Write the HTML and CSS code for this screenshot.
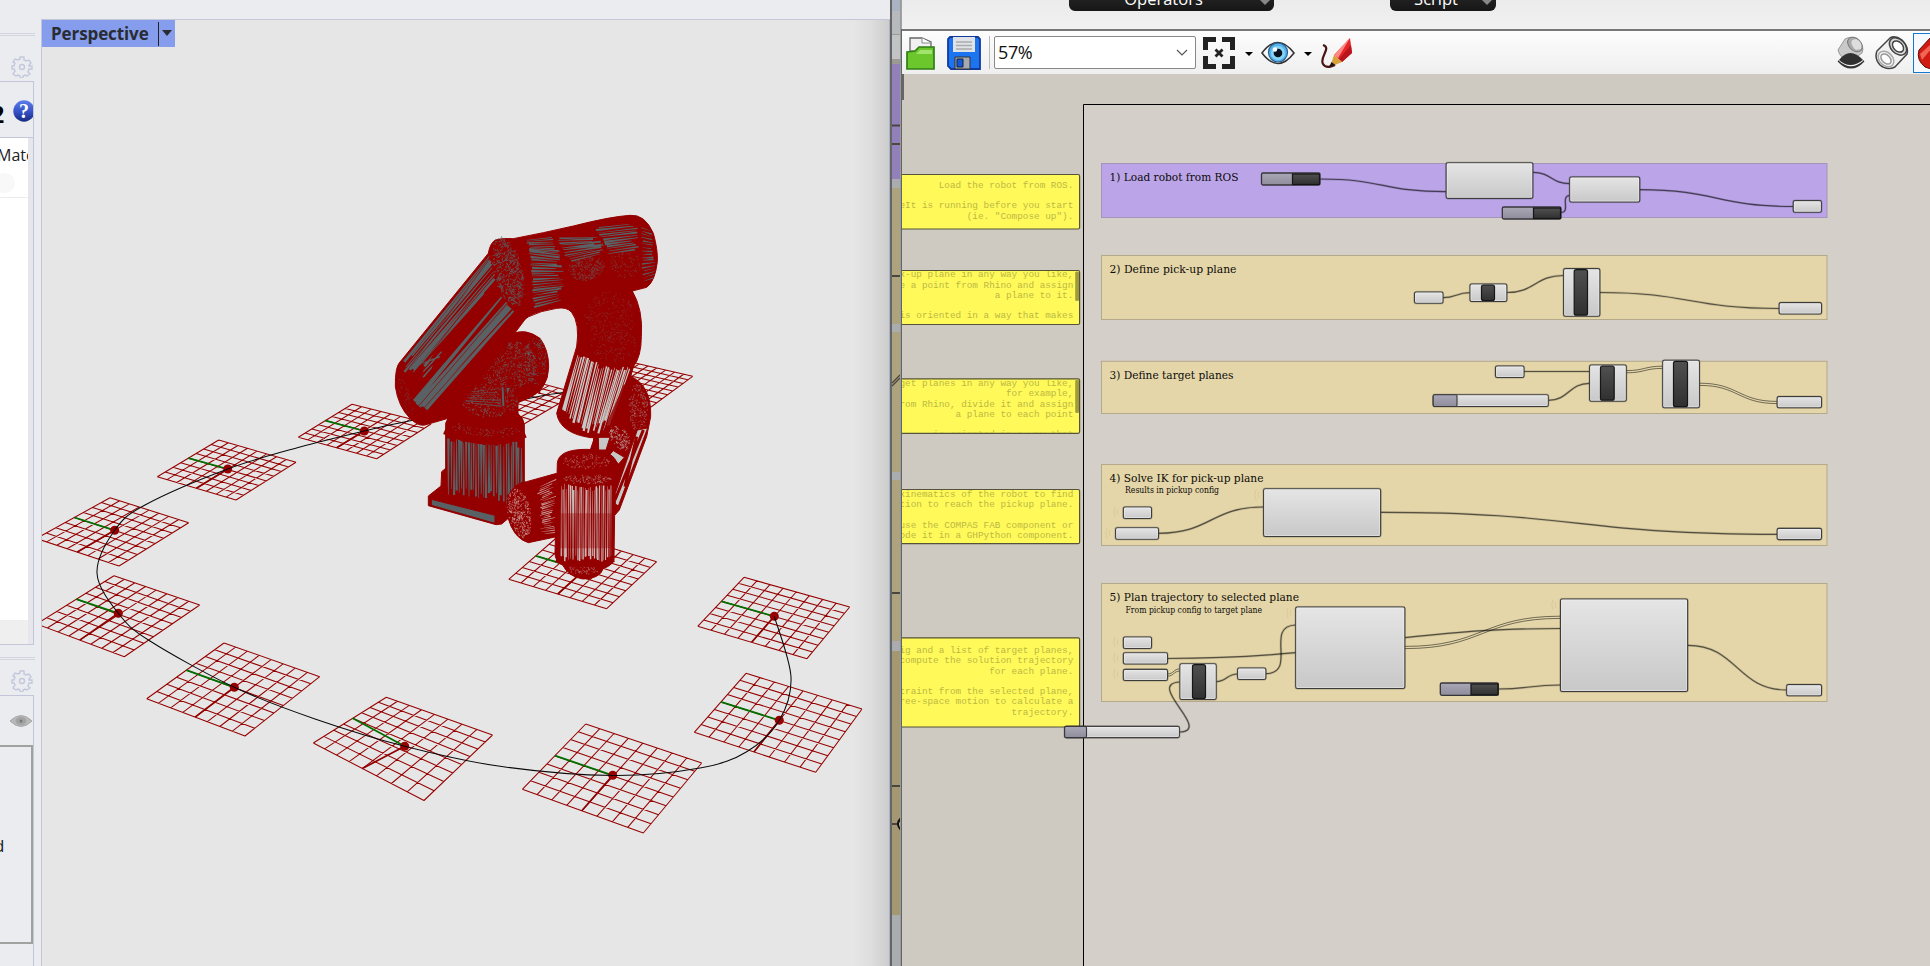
FILE: index.html
```
<!DOCTYPE html>
<html lang="en">
<head>
<meta charset="utf-8">
<title>Robot planning</title>
<link rel="stylesheet" href="styles.css">
</head>
<body>
<div class="desktop">
  <section class="rhino">
    <aside class="side">
      <div class="side-head"><svg class="gear" viewBox="0 0 22 22"><use href="#gear"/></svg></div>
      <div class="panel materials">
        <div class="mat-title"><span class="cut">2</span>
          <svg class="help" viewBox="0 0 22 22"><defs><linearGradient id="hb" x1="0" y1="0" x2="0" y2="1"><stop offset="0" stop-color="#5f7fec"/><stop offset=".55" stop-color="#3450c4"/><stop offset="1" stop-color="#172a7d"/></linearGradient></defs><circle cx="11" cy="11" r="10.7" fill="url(#hb)"/><text x="11" y="18" text-anchor="middle" class="q">?</text></svg>
        </div>
        <div class="mat-body"><div class="mat-row"><span>Mate</span><i></i></div></div>
      </div>
      <div class="side-head second"><svg class="gear" viewBox="0 0 22 22"><use href="#gear"/></svg></div>
      <div class="panel layers">
        <div class="eye-row"><svg width="22" height="12" viewBox="0 0 22 12"><path d="M0 6Q11-5 22 6Q11 17 0 6Z" fill="#b9b9b9" stroke="#a0a0a0" stroke-width=".8"/><ellipse cx="11" cy="6" rx="5.5" ry="4" fill="#a2a2a2"/><circle cx="11" cy="6" r="1.5" fill="#777"/></svg></div>
        <div class="layer-box"><span>d</span></div>
      </div>
    </aside>
    <main class="viewport">
      <div class="tab"><span>Perspective</span><b></b></div>
      <svg id="scene" class="scene" viewBox="42 20 850 946"></svg>
      <div class="shade"></div>
    </main>
  </section>
  <div class="strip">
    <svg viewBox="890 0 12 966" width="12" height="966">
      <rect x="890" width="12" height="966" fill="#aaacaf"/>
      <rect x="892" width="8" height="11" fill="#a9b3c4"/><rect x="892" y="11" width="8" height="23" fill="#b7b9bd"/><rect x="892" y="34" width="8" height="1" fill="#999"/><rect x="892" y="35" width="8" height="24" fill="#c2c3c4"/><rect x="892" y="59" width="8" height="5" fill="#9d9a93"/>
      <rect x="892" y="64" width="8" height="115" fill="#9280ba"/>
      <g fill="#ada37e"><rect x="892" y="188" width="8" height="136"/><rect x="892" y="332" width="8" height="140"/><rect x="892" y="480" width="8" height="161"/><rect x="892" y="651" width="8" height="264" fill="#a39871"/></g>
      <g stroke="#4b453f" stroke-width="2"><path d="M892 125.500h8M892 144h8M892 276h8M892 593h8M892 786h8M892 824h8"/><path d="M892 383l8-8M892 386l8-8" stroke-width="1.300"/></g>
      <path d="M901 818q-6 6 0 12" fill="#ddd" stroke="#111" stroke-width="2"/>
      <rect x="890" width="2" height="966" fill="#666"/><rect x="900" width="1.500" height="966" fill="#9a9a9a"/><rect x="901.200" y="29" width=".8" height="937" fill="#555"/>
    </svg>
  </div>
  <section class="gh">
    <div class="ribbon"><div class="cat ops">Operators<i></i></div><div class="cat script">Script<i></i></div></div>
    <div class="toolbar">
      <svg width="30" height="34" viewBox="0 0 30 34"><path d="M4 15V2h12l9 4v11z" fill="#f1f1f1" stroke="#666" stroke-width="1.300"/><path d="M16 2v5h9" fill="#fff" stroke="#888"/><path d="M1 16l8-1 4-4h15v22H1z" fill="#6cc72c" stroke="#317e16" stroke-width="1.700"/><path d="M3 18h7l4-4h12v4z" fill="#a1e36b"/></svg>
      <svg width="34" height="34" viewBox="0 0 34 34"><path d="M3 1h28l2 2v30H4l-3-3V3z" fill="#1c74f1" stroke="#123a9c" stroke-width="1.800"/><path d="M6 1h22v15H6z" fill="#dfe3e8"/><path d="M9 6h16M9 9.500h16M9 13h16" stroke="#aaa" stroke-width="1.500"/><path d="M8 21h15v12H8z" fill="#a5a8ae" stroke="#333"/><path d="M10 23h6v8h-6z" fill="#1659d8" stroke="#124"/></svg>
      <span class="sep"></span>
      <div class="zoombox"><span>57%</span><svg width="12" height="8" viewBox="0 0 12 8"><path d="M1 1l5 5 5-5" fill="none" stroke="#555" stroke-width="1.200"/></svg></div>
      <svg class="fit" width="34" height="34" viewBox="0 0 34 34"><path d="M3.500 14V3.500H14M20 3.500h10.500V14M30.500 20v10.500H20M14 30.500H3.500V20" fill="none" stroke="#222" stroke-width="5"/><path d="M13.500 13.500l7 7m0-7l-7 7" stroke="#222" stroke-width="2.800"/></svg>
      <i class="dd"></i>
      <svg class="eye" width="34" height="24" viewBox="0 0 34 24"><path d="M1 12Q17-9 33 12Q17 33 1 12Z" fill="#f8f8f8" stroke="#333" stroke-width="1.600"/><circle cx="17" cy="11.500" r="9.500" fill="#57b4e9" stroke="#27609a" stroke-width="1.200"/><circle cx="17" cy="12" r="7" fill="#87d4f6"/><circle cx="17" cy="12" r="4.300" fill="#08111f"/><circle cx="14" cy="8.500" r="2.200" fill="#fff"/></svg>
      <i class="dd"></i>
      <svg class="pen" width="34" height="34" viewBox="0 0 34 34"><path d="M3 9C12 12-1 21 3 28Q6 33 15 29" fill="none" stroke="#4a1512" stroke-width="2.200"/><path d="M30 2L32 17L22 26L14 19Z" fill="#e2262b"/><path d="M30 2L14 19L18 22Z" fill="#ff8a83"/><path d="M31 9L32 17L22 26L19 23Z" fill="#b9151c"/><path d="M14 19L22 26L10 31Z" fill="#d8a13c"/><path d="M11.500 26L15.500 29L8.500 32Z" fill="#291010"/></svg>
      <span class="grow"></span>
      <svg class="cyl" width="28" height="34" viewBox="0 0 28 34"><path d="M1 14L8 3Q15-1 21 4Q28 10 25 17L14 25Q3 23 1 14z" fill="#c9c9c9" stroke="#999"/><ellipse cx="18" cy="8.500" rx="8.500" ry="6" transform="rotate(45 18 8.500)" fill="#aaa" stroke="#777"/><path d="M15 4Q13 9 19 14L24 13Q26 6 19 3z" fill="#ddd"/><path d="M1 25q13 14 26 0q-13 12-26 0" fill="#ddd" stroke="#333" stroke-width="1.200"/><path d="M2 24Q13 10 26 24Q13 34 2 24z" fill="#303030"/></svg>
      <svg class="cyl2" width="34" height="34" viewBox="0 0 34 34"><g fill="none" stroke="#444" stroke-width="1.500"><path d="M2 15L15 2Q20-1 27 4Q34 11 32 18L20 31Q12 35 5 29Q-1 22 2 15z" fill="#f1f1f1"/><ellipse cx="23" cy="10.500" rx="10" ry="7" transform="rotate(45 23 10.500)" fill="#ddd"/><ellipse cx="23" cy="10.500" rx="6.500" ry="4.500" transform="rotate(45 23 10.500)" fill="#fff"/><ellipse cx="11" cy="23" rx="9" ry="6.500" transform="rotate(45 11 23)" stroke="#aaa"/><ellipse cx="11" cy="23" rx="6" ry="4" transform="rotate(45 11 23)" fill="#fff" stroke="#999"/></g></svg>
      <div class="active"><svg width="14" height="34" viewBox="0 0 14 34"><path d="M14 1L2 14Q-1 24 8 31L14 33z" fill="#d01b13" stroke="#650b08"/><path d="M14 8L3 18L5 24L14 13z" fill="#f26556"/></svg></div>
    </div>
    <svg id="canvas" class="canvas" viewBox="902 74 1028 892"></svg>
  </section>
</div>
<svg width="0" height="0" class="defs"><defs><symbol id="gear" viewBox="0 0 22 22"><path d="M9 1h4v3l2 1 3-1 2 3-2 2v1h3v3h-3l-1 3 2 2-3 2-2-1-2 1v2H9v-2l-2-1-2 1-3-2 2-3-1-2H1v-3h2l1-3-2-1 2-3 3 1 2-1z" fill="none" stroke="#c3c9dc" stroke-width="1.400"/><circle cx="11" cy="11" r="2.500" fill="none" stroke="#c3c9dc" stroke-width="1.400"/></symbol></defs></svg>
<script src="draw.js"></script>
</body>
</html>
```
FILE: styles.css
```
html, body { margin: 0; height: 100%; overflow: hidden; }
body { font-family: "Open Sans", "Noto Sans", sans-serif; background: #ebecf0; }
svg { display: block; flex: none; }
.desktop { display: flex; width: 1930px; height: 966px; overflow: hidden; }
.defs { position: absolute; }
.rhino { display: flex; width: 890px; flex: none; box-sizing: border-box; padding-top: 19px; background: #ebecf0; }
.side { width: 41px; flex: none; margin-top: 14px; }
.side-head { width: 35px; height: 47px; border-top: 1px solid #d3d6e2; box-shadow: inset 0 1px #ebecf0, inset 0 2px #d3d6e2; }
.gear { width: 22px; height: 22px; margin-left: 11px; padding-top: 22px; }
.panel { width: 33px; border: 1px solid #c2c6d8; border-left: 0; }
.materials { height: 562px; overflow: hidden; background: #efefef; box-shadow: inset -5px 0 #e6e7ec; }
.mat-title { display: flex; justify-content: flex-end; height: 55px; background: #ebecf0; border-bottom: 1px solid #c2c6d8; }
.cut { width: 13px; overflow: hidden; font: bold 25px "Liberation Serif", serif; padding-top: 19px; text-indent: -8px; line-height: 28px; color: #000; }
.help { width: 22px; height: 22px; margin: 18px -2px 0 0; }
.q { font: bold 20px "Liberation Serif", serif; fill: #fff; }
.mat-body { width: 28px; height: 482px; background: #fff; overflow: hidden; }
.mat-row { height: 59px; border-bottom: 1px solid #ececec; font-size: 16px; color: #222; }
.mat-row span { display: block; margin-left: -3px; line-height: 34px; }
.mat-row i { display: block; width: 20px; height: 20px; margin: 1px 0 0 -5px; border-radius: 50%; background: #f8f8f8; }
.second { margin-top: 12px; height: 37px; }
.second .gear { padding-top: 12px; }
.layers { height: 280px; border-bottom: 0; }
.eye-row { height: 49px; padding: 19px 0 0 10px; box-sizing: border-box; }
.layer-box { height: 195px; border: 2px solid #a1a29f; border-left: 0; }
.layer-box span { display: block; margin-left: -6px; padding-top: 87px; font-size: 17px; line-height: 24px; color: #222; }
.viewport { position: relative; width: 848px; height: 946px; border: solid #c2c6d8; border-width: 1px 0 0 1px; background: #e6e6e6; }
.scene { width: 850px; height: 946px; }
.tab { position: absolute; display: flex; left: 0; top: 0; width: 133px; height: 27px; background: #859dec; color: #292c33; z-index: 2; }
.tab span { width: 117px; box-sizing: border-box; padding-left: 9px; border-right: 1px solid #222; margin: 2px 0 1px; font-size: 17px; line-height: 23px; font-weight: 700; letter-spacing: -.1px; }
.tab b { margin: 10px 0 0 3px; width: 0; height: 0; border: 5.500px solid transparent; border-top: 6px solid #292c33; border-bottom: 0; }
.shade { position: absolute; top: 0; right: 0; width: 38px; height: 100%; background: linear-gradient(90deg, #0000, #00000009 50%, #0000001c); border-right: 1px solid #a9b4c8; box-sizing: border-box; }
.strip { width: 12px; flex: none; }
.gh { width: 1028px; flex: none; }
.ribbon { position: relative; height: 31px; background: linear-gradient(#ebebeb, #f1f1f1); border-bottom: 2px solid #777; box-sizing: border-box; }
.cat { position: absolute; top: -20px; height: 30.500px; background: linear-gradient(#333, #161616); color: #fff; border-radius: 6px; text-align: center; font-size: 16.500px; line-height: 38px; box-sizing: border-box; }
.ops { left: 167px; width: 205px; padding-right: 16px; }
.script { left: 488px; width: 106px; padding-right: 14px; }
.cat i { position: absolute; right: 4px; top: 20px; border: 5px solid transparent; border-top: 5px solid #888; border-bottom: 0; }
.toolbar { display: flex; align-items: center; height: 43px; background: linear-gradient(#fdfdfd, #efefef); padding-left: 4px; box-sizing: border-box; overflow: hidden; }
.toolbar svg + svg { margin-left: 11px; }
.sep { width: 1px; height: 33px; background: #bbb; margin: 0 4px 0 8px; }
.zoombox { display: flex; align-items: center; justify-content: space-between; width: 202px; height: 33px; box-sizing: border-box; border: 1px solid #888; border-radius: 2px; background: #fff; padding: 0 7px 0 3px; font-size: 18px; line-height: 30px; color: #111; letter-spacing: -.4px; }
.zoombox span { padding-bottom: 1px; }
.fit { margin-left: 6px; }
.dd { border: 4px solid transparent; border-top: 4px solid #000; border-bottom: 0; margin-left: 9px; margin-top: 2px; }
.eye { margin-left: 8px; }
.pen { margin-left: 8px; }
.grow { flex: 1; }
.toolbar .cyl2 { margin: 0 4px 0 10px; }
.active { width: 17px; height: 40px; box-sizing: border-box; border: 1px solid #1478cf; border-right: 0; display: flex; align-items: center; padding-left: 3px; background: #f6f9fc; }
.canvas { width: 1028px; height: 892px; background: #cec9c1; }
.note { font: 9.350px "Liberation Mono", monospace; fill: #bcb842; text-anchor: end; }
.title, .sub { font-family: "DejaVu Serif Condensed", "DejaVu Serif", serif; font-stretch: condensed; fill: #0c0b08; }
.title { font-size: 11.700px; }
.sub { font-size: 8.700px; }
```
FILE: draw.js
```
(function () {
  /* ---------- node canvas ---------- */
  var o = '<defs>' +
    '<linearGradient id="n" x1="0" y1="0" x2="0" y2="1"><stop offset="0" stop-color="#e5e5e5"/><stop offset="1" stop-color="#c8c8c8"/></linearGradient>' +
    '<linearGradient id="k" x1="0" y1="0" x2="0" y2="1"><stop offset="0" stop-color="#505050"/><stop offset="1" stop-color="#303030"/></linearGradient>' +
    '<linearGradient id="p" x1="0" y1="0" x2="0" y2="1"><stop offset="0" stop-color="#aaa8b6"/><stop offset="1" stop-color="#8f8d9c"/></linearGradient></defs>';
  function rect(x1, y1, x2, y2, r, fill, stroke, sw) {
    return '<rect x="' + x1 + '" y="' + y1 + '" width="' + (x2 - x1) + '" height="' + (y2 - y1) + '" rx="' + r + '" fill="' + fill + '" stroke="' + stroke + '" stroke-width="' + (sw || 1) + '"/>';
  }
  o += '<path d="M1083.500 966V104.500H1940V966" fill="#d4cfc8" stroke="#000"/>';

  var notes = [
    [174.5, 229, [[187.7, 'Load the robot from ROS.'], [208.3, 'eIt is running before you start'], [218.7, '(ie. "Compose up").']]],
    [270.5, 324.5, [[277.3, 'k-up plane in any way you like,'], [287.7, 'e a point from Rhino and assign'], [297.7, 'a plane to it.'], [318, 'is oriented in a way that makes']], 302],
    [378.8, 433.3, [[386, 'get planes in any way you like,'], [396.3, 'for example,'], [406.7, 'rom Rhino, divide it and assign'], [417, 'a plane to each point'], [437.3, 'is oriented in a way that']], 414],
    [489.5, 543.7, [[497.3, 'kinematics of the robot to find'], [507.3, 'tion to reach the pickup plane.'], [528, 'use the COMPAS FAB component or'], [538.3, 'ode it in a GHPython component.']]],
    [637.8, 727, [[653.3, 'ig and a list of target planes,'], [663.3, 'compute the solution trajectory'], [673.7, 'for each plane.'], [694, 'traint from the selected plane,'], [704, 'ree-space motion to calculate a'], [714.7, 'trajectory.']]]
  ];
  notes.forEach(function (n, i) {
    o += rect(800, n[0], 1079.6, n[1], 1.5, '#fffa5a', '#55533a', 1.2);
    o += '<clipPath id="c' + i + '"><rect x="902" y="' + (n[0] + .5) + '" width="177" height="' + (n[1] - n[0] - 1) + '"/></clipPath><g clip-path="url(#c' + i + ')">';
    n[2].forEach(function (t) { o += '<text class="note" x="1073.300" y="' + t[0] + '">' + t[1] + '</text>'; });
    if (n[3]) o += rect(1075.2, n[0] + 1, 1079, n[3] - 1, 1.5, '#a09c3a', 'none');
    o += '</g>';
  });

  [[163.5, 217.5, '#bba5e8', '#a394b8'], [255.5, 319.5, '#e4d6a9', '#b4a98a'], [361.3, 413.5, '#e4d6a9', '#b4a98a'], [464.5, 545.5, '#e4d6a9', '#b4a98a'], [583.5, 701.5, '#e4d6a9', '#b4a98a']]
    .forEach(function (g) { o += rect(1101.5, g[0], 1827, g[1], 0, g[2], g[3]); });

  function text(c, x, y, w, s) { o += '<text class="' + c + '" x="' + x + '" y="' + y + '" textLength="' + w + '" lengthAdjust="spacingAndGlyphs">' + s + '</text>'; }
  text('title', 1109.5, 181, 129, '1) Load robot from ROS');
  text('title', 1109.5, 272.7, 127, '2) Define pick-up plane');
  text('title', 1109.5, 378.7, 124, '3) Define target planes');
  text('title', 1109.5, 482, 154, '4) Solve IK for pick-up plane');
  text('sub', 1125, 493.2, 94, 'Results in pickup config');
  text('title', 1109.5, 600.7, 189.5, '5) Plan trajectory to selected plane');
  text('sub', 1125.5, 613.4, 136.5, 'From pickup config to target plane');

  var wires = [];
  function wire(x1, y1, x2, y2, dbl) {
    var m = (x1 + x2) / 2;
    (dbl ? [-1.1, 1.1] : [0]).forEach(function (d) {
      wires.push([dbl, 'M' + x1 + ' ' + (y1 + d) + 'C' + m + ' ' + (y1 + d) + ' ' + m + ' ' + (y2 + d) + ' ' + x2 + ' ' + (y2 + d)]);
    });
  }
  function curve(d) { wires.push([0, d]); }
  wire(1320, 179, 1446, 191.7); wire(1533, 172.3, 1569.5, 183.7); wire(1640, 189.7, 1793, 206.5);
  curve('M1561 212.500C1571 212.500 1560 196 1569.500 195.500');
  wire(1443, 297.7, 1469.6, 292.7); wire(1507, 292.5, 1563.4, 275.5); wire(1600, 292.5, 1779, 308.5);
  wire(1524, 371.5, 1589.4, 371.5); wire(1548.5, 400.3, 1589.4, 383.3); wire(1626.5, 371.7, 1662.5, 367.3, 1); wire(1699.6, 384.3, 1777, 402.5, 1);
  wire(1158.7, 533.3, 1263.3, 507); wire(1380.8, 512.3, 1777, 534.3);
  curve('M1167.700 658.500C1215 658.500 1260 656 1295.500 652.700');
  wire(1167.7, 675, 1179.7, 670, 1); wire(1216.3, 681.7, 1237.3, 674);
  curve('M1179.700 732C1213 731 1145 684 1179.700 682');
  curve('M1266 673.700C1298 673 1264 626 1295.500 625');
  curve('M1405 637.700C1465 631 1500 628.700 1560.300 628.500');
  wire(1405, 647.5, 1560.3, 617.3, 1); wire(1498.7, 689, 1560.3, 685); wire(1687.8, 645.3, 1786.5, 690);
  wires.forEach(function (w) {
    if (!w[0]) o += '<path d="' + w[1] + '" fill="none" stroke="#000" stroke-opacity=".14" stroke-width="2.500"/>';
    o += '<path d="' + w[1] + '" fill="none" stroke="#000" stroke-opacity=".57" stroke-width="' + (w[0] ? .9 : 1.2) + '"/>';
  });

  function box(x1, y1, x2, y2) { o += rect(x1 - .6, y1 - .6, x2 + .6, y2 + .6, 2, 'none', 'rgba(0,0,0,.2)') + rect(x1, y1, x2, y2, 1.8, 'url(#n)', '#3c3c3c', 1.1) + rect(x1 + 1, y1 + 1, x2 - 1, y2 - 1, 1, 'none', 'rgba(255,255,255,.35)'); }
  function comp(x1, y1, x2, y2, a, b) { box(x1, y1, x2, y2); o += rect(a + .5, y1 + 1, b - .5, y2 - 1, 2, 'url(#k)', '#161616', 1.2); }
  function toggle(x1, y1, x2, y2, s) { o += rect(x1, y1, x2, y2, 1.5, 'url(#p)', '#36363a', 1.3) + rect(s, y1 + 1, x2 - .5, y2 - .5, 0, 'url(#k)', '#151515', 1.2); }
  function slider(x1, y1, x2, y2, s) { box(x1, y1, x2, y2); o += rect(x1, y1, s, y2, 1.5, 'url(#p)', '#38383c', 1.1); }
  toggle(1261.5, 173, 1320, 185, 1292.5); box(1446.2, 162.8, 1532.8, 198.4); box(1569.7, 177, 1639.7, 202);
  toggle(1502.3, 207, 1561, 219, 1533.5); box(1793.3, 200.6, 1821.4, 212.2);
  box(1414.5, 292, 1443, 303.3); comp(1470, 284, 1506.8, 301.5, 1481, 1495); comp(1563.6, 268.6, 1599.8, 316.2, 1573.7, 1588); box(1779.2, 302.6, 1821.5, 314);
  box(1495.5, 366, 1524, 377.5); slider(1433.2, 394.7, 1548.3, 406.5, 1457); comp(1589.6, 365, 1626.3, 401.2, 1600, 1614.7); comp(1662.7, 360.3, 1699.4, 407.7, 1673, 1688); box(1777.2, 396.6, 1821.5, 407.7);
  box(1123.4, 507, 1151.5, 518.5); box(1115.6, 527.7, 1158.5, 539.3); box(1263.6, 488.7, 1380.6, 536.5); box(1777.2, 528.4, 1821.5, 539.6);
  box(1123.4, 637, 1151.5, 648.5); box(1123.4, 652.7, 1167.5, 664); box(1123.4, 669.4, 1167.5, 680.5); comp(1179.9, 663.7, 1216.2, 699.5, 1192, 1206); box(1237.6, 668, 1265.8, 679.5);
  box(1295.7, 607, 1404.8, 688.5); box(1560.5, 599, 1687.6, 691.5); toggle(1440.3, 683, 1498.4, 695.3, 1471); box(1786.7, 684.6, 1821.5, 695.8); slider(1064.6, 726.4, 1179.4, 737.6, 1086.5);
  var waves = '';
  [[1118, 512], [1110, 533], [1118, 642], [1118, 658], [1118, 674], [1259, 495], [1291, 613], [1556, 605]].forEach(function (p) { waves += 'M' + p[0] + ' ' + (p[1] - 3) + 'q-2 3 0 6m-3-8q-2.500 5 0 10'; });
  o += '<path d="' + waves + '" fill="none" stroke="#bba970" stroke-opacity=".25"/><rect x="902" y="74" width="2" height="26" fill="#666"/>';
  document.getElementById('canvas').innerHTML = o;

  /* ---------- 3D viewport ---------- */
  var seed = 7;
  function rnd() { seed = (seed * 16807) % 2147483647; return seed / 2147483647; }
  // Projective map from the unit square: left, top, right, bottom corners
  function mapper(q) {
    var x0 = q[0], y0 = q[1], x1 = q[2], y1 = q[3], x2 = q[4], y2 = q[5], x3 = q[6], y3 = q[7];
    var a1 = x1 - x2, a2 = x3 - x2, a3 = x0 - x1 + x2 - x3, b1 = y1 - y2, b2 = y3 - y2, b3 = y0 - y1 + y2 - y3;
    var d = a1 * b2 - a2 * b1, g = (a3 * b2 - a2 * b3) / d, h = (a1 * b3 - a3 * b1) / d;
    return function (u, v) {
      var w = g * u + h * v + 1;
      return (((x1 - x0 + g * x1) * u + (x3 - x0 + h * x3) * v + x0) / w).toFixed(1) + ' ' +
        (((y1 - y0 + g * y1) * u + (y3 - y0 + h * y3) * v + y0) / w).toFixed(1);
    };
  }
  var grids = [
    [575, 388, 622, 360, 692.7, 376.3, 651, 407], [447, 401, 505, 374, 577, 393, 524, 424],
    [298.3, 437.3, 352, 404.3, 431, 424, 376.7, 458.7, 364.3, 431], [157.3, 476.7, 218.7, 440, 296, 462.3, 236, 500, 227.7, 469],
    [36.5, 538.5, 110, 497.7, 188.7, 522.7, 119, 566, 114.7, 530.3], [36.7, 624, 114, 575.7, 199.7, 605, 124.3, 656.7, 118.3, 613.3],
    [146.7, 698.7, 224, 643, 319.7, 676.7, 245, 736, 234.3, 687.3], [313.3, 743, 386.3, 697.3, 492.5, 735, 424, 800.5, 404.7, 746.3],
    [522.3, 789.3, 585.7, 724, 701.7, 763, 643.3, 833, 612.7, 775.3], [694.3, 732.3, 746, 673.3, 862, 709, 815.7, 772.3, 779.3, 720.3],
    [697.7, 626.3, 744, 577.3, 849.7, 607, 807, 658.7, 774.3, 616.3], [508.7, 579.3, 562, 533, 656.7, 561.7, 606.7, 608.7]];
  var s = '', red = '#960000', lines = '', over = '', dots = '';
  grids.forEach(function (q) {
    var m = mapper(q), i, mid = q.length > 8 ? q[8] + ' ' + q[9] : m(.5, .5);
    for (i = 0; i <= 8; i++) lines += 'M' + m(i / 8, 0) + 'L' + m(i / 8, 1) + 'M' + m(0, i / 8) + 'L' + m(1, i / 8);
    over += '<path d="M' + mid + 'L' + m(.5, 0) + '" stroke="#007000" stroke-width="1.800"/><path d="M' + mid + 'L' + m(0, .5) + '" stroke="#900000" stroke-width="1.700"/>';
    if (q.length > 8) dots += '<circle cx="' + q[8] + '" cy="' + q[9] + '" r="4.500" fill="' + red + '"/>';
  });
  s += '<path d="' + lines + '" fill="none" stroke="' + red + '" stroke-width="1.050"/>' + over;
  var pts = [[774.3, 616.3], [791, 677], [779.3, 720.3], [746.7, 751.7], [700, 768], [612.7, 775.5], [500, 766.3], [404.7, 746.3], [315, 719], [234.3, 687.3], [150, 641], [118.3, 613.3], [97, 573], [114.7, 530.3], [145, 505], [227.7, 469], [300, 447], [364.3, 431], [409, 421], [527, 398.7], [560, 393], [640, 384]];
  var c = 'M' + pts[0].join(' ');
  for (var i = 0; i < pts.length - 1; i++) {
    var a = pts[i - 1] || pts[i], b = pts[i], d = pts[i + 1], e = pts[i + 2] || d;
    c += 'C' + [b[0] + (d[0] - a[0]) / 6, b[1] + (d[1] - a[1]) / 6, d[0] - (e[0] - b[0]) / 6, d[1] - (e[1] - b[1]) / 6, d[0], d[1]].map(function (v) { return v.toFixed(1); }).join(' ');
  }
  s += dots + '<path d="' + c + '" fill="none" stroke="#0a0a0a" stroke-width="1.050"/>';

  // Robot arm, drawn at three times its size
  s += '<g transform="translate(380 200) scale(.33333)">';
  var R = '#940000', G = '#586164', L = '#c6c8c5';
  function shape(d, f) { s += '<path d="' + d + '" fill="' + (f || R) + '" stroke="' + R + '" stroke-width="3"/>'; }
  // Thin wedges running from edge a-b to edge c-d
  function wedges(q, n, col, wmin, wmax, t0, t1) {
    var p = '';
    for (var k = 0; k < n; k++) {
      var u = (k + .3 + rnd() * .4) / n, w = wmin + rnd() * (wmax - wmin);
      var f = t0 * rnd(), g = 1 - t1 * rnd();
      var X1 = q[0] + (q[2] - q[0]) * u, Y1 = q[1] + (q[3] - q[1]) * u, X2 = q[4] + (q[6] - q[4]) * u, Y2 = q[5] + (q[7] - q[5]) * u;
      var dx = X2 - X1, dy = Y2 - Y1, l = Math.hypot(dx, dy), nx = -dy / l * w / 2, ny = dx / l * w / 2;
      var ax = X1 + dx * f, ay = Y1 + dy * f, bx = X1 + dx * g, by = Y1 + dy * g, tip = rnd() > .5 ? 1 : .3, tp = 1.3 - tip;
      p += 'M' + [ax - nx * tip, ay - ny * tip, bx - nx * tp, by - ny * tp, bx + nx * tp, by + ny * tp, ax + nx * tip, ay + ny * tip].map(function (v) { return v.toFixed(1); }).join(' ') + 'Z';
    }
    s += '<path d="' + p + '" fill="' + col + '"/>';
  }
  function speck(cx, cy, rx, ry, rot, n, col, len) {
    var p = '';
    for (var k = 0; k < n; k++) {
      var t = rnd() * 6.283, r = Math.sqrt(rnd()), x = cx + rx * r * Math.cos(t), y = cy + ry * r * Math.sin(t), an = rnd() * 6.283, l = 2 + rnd() * len;
      p += 'M' + x.toFixed(1) + ' ' + y.toFixed(1) + 'l' + (l * Math.cos(an)).toFixed(1) + ' ' + (l * Math.sin(an)).toFixed(1);
    }
    s += '<path d="' + p + '" stroke="' + col + '" stroke-width="2" fill="none" transform="rotate(' + rot + ' ' + cx + ' ' + cy + ')"/>';
  }
  // base plate and column
  shape('M145 888L183 858L185 815L197 805L380 880L385 955L365 972L348 974L145 917Z');
  shape('M154 898L345 946V970L154 916Z', G);
  shape('M197 670Q200 655 215 650L413 640Q432 655 433 675V905Q320 950 197 890Z');
  wedges([203, 710, 427, 726, 203, 890, 427, 920], 30, G, 4, 8, .1, .18);
  s += '<path d="M197 685Q320 740 433 695" fill="none" stroke="' + R + '" stroke-width="38"/>';
  speck(315, 690, 105, 20, 4, 130, '#7a5050', 3);
  // shoulder
  shape('M250 560L395 403Q435 382 480 415Q506 450 506 500Q506 570 440 597L414 608V645Q410 690 320 680Q215 670 205 635Z');
  speck(385, 495, 85, 75, 0, 520, '#6c5a5b', 4); speck(330, 600, 85, 50, 0, 330, '#705b5b', 4); speck(465, 480, 32, 72, 0, 130, G, 6);
  wedges([375, 560, 385, 625, 255, 575, 255, 610], 7, G, 1, 3, .2, .2);
  shape('M363 560L372 560L375 620L366 620Z', G); shape('M378 562L392 562L380 590Z', G);
  s += '<path d="M440 405Q485 455 478 582" fill="none" stroke="' + R + '" stroke-width="5"/><path d="M208 635Q300 680 412 650M215 655Q310 705 415 668" fill="none" stroke="' + R + '" stroke-width="7"/>';
  // rear forearm and wrist
  shape('M755 530Q815 560 812 650L800 710L718 930L705 945L690 900L650 790L640 715L690 690L730 580Z');
  speck(775, 625, 28, 75, 0, 180, '#a37570', 3);
  shape('M803 684L715 918L706 912L706 880L772 690Z', L);
  s += '<path d="M790 690L705 900M770 710L735 860" stroke="' + R + '" stroke-width="9"/>';
  shape('M655 712L690 712L678 750L656 750Z', L); shape('M700 752L733 772L716 792L688 765Z', L);
  speck(720, 715, 25, 42, -35, 100, '#b79a97', 6);
  shape('M648 700L656 758H628Z');
  // elbow tube
  shape('M345 121Q360 114 400 116L490 98L580 78Q690 50 750 46Q795 42 820 100Q834 150 832 185Q825 245 800 262L757 273Q790 330 784 410Q784 470 760 500L748 545Q735 600 720 620L590 440Q600 370 575 337Q560 320 530 325Q430 340 395 395L330 480Z');
  wedges([445, 150, 460, 325, 550, 165, 555, 300], 21, G, 3, 8, .08, .3);
  wedges([525, 112, 565, 190, 655, 110, 680, 160], 11, G, 3, 8, .1, .25);
  wedges([640, 80, 680, 165, 775, 66, 778, 150], 12, G, 3, 8, .12, .25);
  wedges([782, 75, 785, 250, 820, 90, 828, 235], 17, G, 2, 5, .2, .3);
  wedges([425, 120, 445, 150, 515, 108, 550, 165], 8, G, 2, 6, .15, .25);
  speck(620, 205, 55, 35, -10, 220, '#704a4a', 4); speck(735, 195, 50, 40, 0, 120, '#7a4040', 3);
  speck(690, 350, 75, 75, 0, 260, '#84393a', 2); speck(700, 435, 70, 50, 0, 150, '#84393a', 2);
  s += '<path d="M515 100Q580 190 560 320M630 78Q690 130 695 230M770 52Q790 130 780 265" fill="none" stroke="' + R + '" stroke-width="5"/>';
  // bent tube lower half
  shape('M590 440L530 640Q540 700 632 713Q680 713 690 690L762 492Q680 510 590 440Z');
  wedges([592, 458, 676, 498, 542, 640, 626, 706], 14, L, 4, 7.5, .08, .08);
  wedges([676, 498, 754, 500, 626, 706, 685, 700], 12, L, 3, 7, .06, .25);
  s += '<path d="M730 555L742 550L690 690L665 705Z" fill="' + R + '" opacity=".85"/>';
  // upper arm link
  shape('M345 121Q330 130 325 160L60 486Q45 500 46 560Q55 620 90 655Q115 680 135 675L215 652L445 345Q460 270 440 200Q420 140 390 120Z');
  wedges([331, 160, 348, 240, 62, 495, 75, 550], 7, G, 7, 13, .02, .12);
  wedges([348, 230, 362, 275, 110, 500, 130, 540], 4, G, 5, 9, .35, .15);
  wedges([362, 284, 410, 340, 98, 606, 126, 646], 4, G, 14, 20, .01, .05);
  s += '<path d="M345 245L366 272L180 495L150 525L165 470L145 490L160 462Z" fill="' + R + '"/><path d="M128 490L180 470M130 515L185 455M150 545L195 490" stroke="' + G + '" stroke-width="4"/>';
  s += '<path d="M330 175L75 520M345 210L80 555M385 305L110 625M400 322L118 640" stroke="' + R + '" stroke-width="2"/>';
  speck(385, 215, 42, 105, -14, 430, G, 7); speck(78, 590, 15, 60, -18, 50, '#7c3030', 3);
  s += '<path d="M398 125Q470 200 437 330" fill="none" stroke="' + R + '" stroke-width="20"/>';
  // wrist cylinder
  shape('M385 885Q410 845 440 845L530 820L530 1010L445 1028Q400 1015 383 950Z');
  speck(420, 940, 34, 75, -12, 330, '#c99c98', 3);
  wedges([470, 862, 482, 1005, 530, 835, 528, 1000], 26, '#c79f9c', 2, 4, .3, .4);
  s += '<path d="M440 850Q475 935 455 1023" fill="none" stroke="' + R + '" stroke-width="16"/>';
  // vertical flange cylinder
  shape('M532 790Q535 748 620 748Q705 750 712 795L705 860L702 1080Q695 1098 670 1105Q660 1137 608 1137Q565 1130 548 1095Q525 1085 525 1060Z');
  wedges([540, 850, 696, 850, 540, 1085, 696, 1085], 28, '#c9b9b7', 2.5, 5, .1, .08);
  s += '<path d="M532 940H700V1045H532Z" fill="' + R + '" opacity=".35"/>';
  s += '<path d="M535 822Q620 875 705 822" fill="none" stroke="' + R + '" stroke-width="26"/><path d="M528 1080Q610 1125 702 1080" fill="none" stroke="' + R + '" stroke-width="12"/>';
  speck(620, 785, 70, 22, 0, 120, '#b56a67', 3); speck(620, 838, 75, 13, 0, 110, '#b58582', 3); speck(608, 1112, 48, 13, 0, 60, '#bb7c79', 3);
  s += '</g>';
  document.getElementById('scene').innerHTML = s;
})();
```
